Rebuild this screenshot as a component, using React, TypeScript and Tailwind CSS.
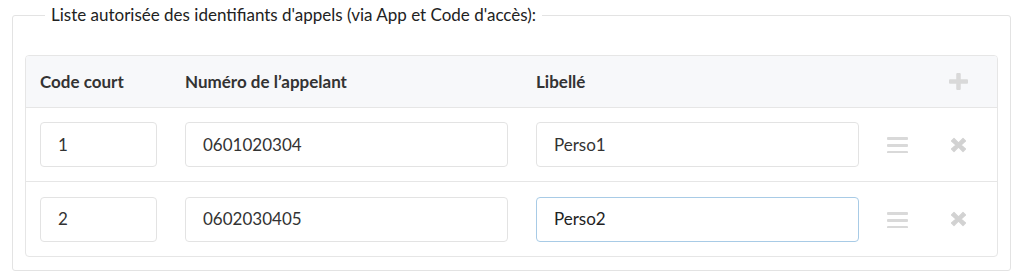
const rows = [
  { code: "1", numero: "0601020304", libelle: "Perso1", focused: false },
  { code: "2", numero: "0602030405", libelle: "Perso2", focused: true },
];

function BarsIcon() {
  return (
    <svg width="21" height="17" viewBox="0 0 21 17" className="text-[#d9d9d9]">
      <rect x="0" y="1" width="21" height="3" rx="1" fill="currentColor" />
      <rect x="0" y="8" width="21" height="3" rx="1" fill="currentColor" />
      <rect x="0" y="15" width="21" height="2.5" rx="1" fill="currentColor" />
    </svg>
  );
}

function TimesIcon() {
  return (
    <svg width="17" height="16" viewBox="0 0 17 16" className="text-[#d2d2d2]">
      <path
        d="M1.5 4 L4 1.5 L8.5 6 L13 1.5 L15.5 4 L11 8 L15.5 12 L13 14.5 L8.5 10 L4 14.5 L1.5 12 L6 8 Z"
        fill="currentColor"
        stroke="currentColor"
        strokeWidth="1.2"
        strokeLinejoin="round"
      />
    </svg>
  );
}

function PlusIcon() {
  return (
    <svg width="19" height="17" viewBox="0 0 19 17" className="text-[#d9d9d9]">
      <rect x="7.25" y="0" width="4.5" height="17" rx="1" fill="currentColor" />
      <rect x="0" y="6.25" width="19" height="4.5" rx="1" fill="currentColor" />
    </svg>
  );
}

export default function App() {
  return (
    <div className="bg-white w-[1024px] h-[279px] pt-[5px] font-['Lato','Open_Sans',sans-serif] text-[#333]">
      <fieldset className="ml-[12px] mr-[13px] border border-[#e3e3e3] rounded-[3px] px-[12px] pb-[13px]">
        <legend className="ml-[20px] px-[6px] text-[17px] leading-[20px] text-[#222]">
          Liste autorisée des identifiants d'appels (via App et Code d'accès):
        </legend>

        {/* Table */}
        <div className="mt-[30px] border border-[#e6e6e6] rounded-[4px] overflow-hidden">
          <div className="flex items-center h-[52px] bg-[#f7f8fa] border-b border-[#e6e6e6] pl-[14px] text-[17px] font-bold text-[#333]">
            <div className="w-[117px]">Code court</div>
            <div className="ml-[28px] w-[323px]">Numéro de l’appelant</div>
            <div className="ml-[28px] w-[323px]">Libellé</div>
            <div className="w-[76px]" />
            <div className="w-[46px] flex justify-center">
              <PlusIcon />
            </div>
          </div>

          {rows.map((row, i) => (
            <div
              key={row.code}
              className={`flex items-center h-[74px] pl-[14px] ${i === 0 ? "border-b border-[#e6e6e6]" : ""}`}
            >
              <div className="w-[117px] h-[45px] border border-[#e3e3e3] rounded-[4px] flex items-center px-[17px] text-[17px]">
                {row.code}
              </div>
              <div className="ml-[28px] w-[323px] h-[45px] border border-[#e3e3e3] rounded-[4px] flex items-center px-[17px] text-[17px]">
                {row.numero}
              </div>
              <div
                className={`ml-[28px] w-[323px] h-[45px] border rounded-[4px] flex items-center px-[17px] text-[17px] ${
                  row.focused ? "border-[#a8cbe6] text-[#222]" : "border-[#e3e3e3]"
                }`}
              >
                {row.libelle}
              </div>
              <div className="w-[76px] flex justify-center">
                <BarsIcon />
              </div>
              <div className="w-[46px] flex justify-center">
                <TimesIcon />
              </div>
            </div>
          ))}
        </div>
      </fieldset>
    </div>
  );
}
